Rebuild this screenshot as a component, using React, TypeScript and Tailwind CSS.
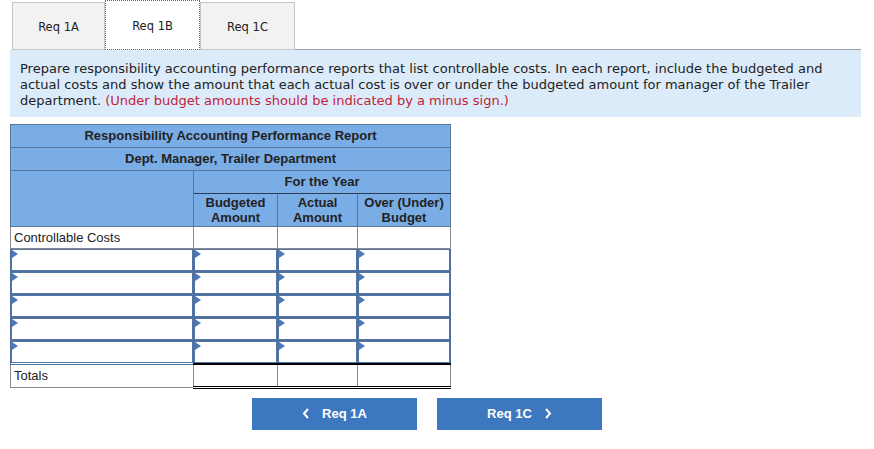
import React from 'react';

const Marker: React.FC = () => (
  <span className="absolute left-0 top-0 w-0 h-0 border-t-[4px] border-b-[4px] border-l-[6px] border-t-transparent border-b-transparent border-l-[#4a78b8]" />
);

const InputCell: React.FC = () => (
  <td className="p-0 border border-[#4e6f9c]">
    <div className="relative h-[22px] border border-[#5375a6] bg-white">
      <Marker />
    </div>
  </td>
);

const App: React.FC = () => {
  const rows = [0, 1, 2, 3, 4];

  return (
    <div className="w-[874px] h-[449px] bg-white relative" style={{ fontFamily: '"DejaVu Sans", Verdana, sans-serif' }}>
      {/* tabs */}
      <div className="flex items-end pl-[12px] w-[861px] h-[50px]">
        <div className="w-[93px] h-[48px] pt-[4px] border border-[#c6c6c6] bg-[#f2f2f2] flex items-center justify-center text-[11.5px] text-[#222]">
          Req 1A
        </div>
        <div className="w-[95px] h-[50px] pt-[4px] border border-dotted border-[#4a6fa5] bg-white flex items-center justify-center text-[11.5px] text-[#222]">
          Req 1B
        </div>
        <div className="w-[95px] h-[48px] pt-[4px] border border-[#c6c6c6] bg-[#f2f2f2] flex items-center justify-center text-[11.5px] text-[#222]">
          Req 1C
        </div>
        <div className="flex-1 border-b border-[#9aa5b1]" />
      </div>

      {/* instructions */}
      <div className="ml-[10px] w-[851px] h-[67px] bg-[#dcebf9] px-[10px] pt-[11px] text-[13px] leading-[16px] text-[#222]">
        Prepare responsibility accounting performance reports that list controllable costs. In each report, include the budgeted and actual costs and show the amount that each actual cost is over or under the budgeted amount for manager of the Trailer department.{' '}
        <span className="text-[#c0233a]">(Under budget amounts should be indicated by a minus sign.)</span>
      </div>

      {/* table */}
      <div className="ml-[10px] mt-[7px]" style={{ fontFamily: '"Liberation Sans", Arial, sans-serif' }}>
        <table className="border-collapse table-fixed w-[440px] text-[13px] text-[#222]">
          <colgroup>
            <col className="w-[183px]" />
            <col className="w-[84px]" />
            <col className="w-[80px]" />
            <col className="w-[93px]" />
          </colgroup>
          <thead>
            <tr className="h-[23px] bg-[#7aade5]">
              <th colSpan={4} className="border border-[#5c7898] font-bold text-center p-0">
                Responsibility Accounting Performance Report
              </th>
            </tr>
            <tr className="h-[23px] bg-[#7aade5]">
              <th colSpan={4} className="border border-[#5c7898] font-bold text-center p-0">
                Dept. Manager, Trailer Department
              </th>
            </tr>
            <tr className="h-[23px] bg-[#7aade5]">
              <th rowSpan={2} className="border border-[#5c7898] p-0" />
              <th colSpan={3} className="border border-[#5c7898] border-b-[#2d3d52] font-bold text-center p-0">
                For the Year
              </th>
            </tr>
            <tr className="h-[33px] bg-[#7aade5] leading-[15px]">
              <th className="border border-[#5c7898] font-bold text-center p-0">
                Budgeted
                <br />
                Amount
              </th>
              <th className="border border-[#5c7898] font-bold text-center p-0">
                Actual
                <br />
                Amount
              </th>
              <th className="border border-[#5c7898] font-bold text-center p-0">
                Over (Under)
                <br />
                Budget
              </th>
            </tr>
          </thead>
          <tbody>
            <tr className="h-[22px]">
              <td className="border border-[#8a8a8a] px-[3px] py-0">Controllable Costs</td>
              <td className="border border-[#8a8a8a]" />
              <td className="border border-[#8a8a8a]" />
              <td className="border border-[#8a8a8a]" />
            </tr>
            {rows.map((r) => (
              <tr key={r}>
                <InputCell />
                <InputCell />
                <InputCell />
                <InputCell />
              </tr>
            ))}
            <tr className="h-[23px]">
              <td className="border border-[#8a8a8a] px-[3px] py-0">Totals</td>
              <td className="border border-[#8a8a8a] border-t-2 border-t-black border-b-[3px] border-b-black border-double p-0" />
              <td className="border border-[#8a8a8a] border-t-2 border-t-black border-b-[3px] border-b-black border-double p-0" />
              <td className="border border-[#8a8a8a] border-t-2 border-t-black border-b-[3px] border-b-black border-double p-0" />
            </tr>
          </tbody>
        </table>
      </div>

      {/* nav buttons */}
      <div className="flex gap-[20px] ml-[252px] mt-[9px]" style={{ fontFamily: '"Liberation Sans", Arial, sans-serif' }}>
        <button className="w-[165px] h-[32px] bg-[#3d77bf] text-white font-bold text-[13px] flex items-center justify-center gap-[12px]">
          <svg width="8" height="11" viewBox="0 0 8 11">
            <path d="M6 1 L2 5.5 L6 10" stroke="white" strokeWidth="2" fill="none" />
          </svg>
          <span>Req 1A</span>
        </button>
        <button className="w-[165px] h-[32px] bg-[#3d77bf] text-white font-bold text-[13px] flex items-center justify-center gap-[12px]">
          <span>Req 1C</span>
          <svg width="8" height="11" viewBox="0 0 8 11">
            <path d="M2 1 L6 5.5 L2 10" stroke="white" strokeWidth="2" fill="none" />
          </svg>
        </button>
      </div>
    </div>
  );
};

export default App;
